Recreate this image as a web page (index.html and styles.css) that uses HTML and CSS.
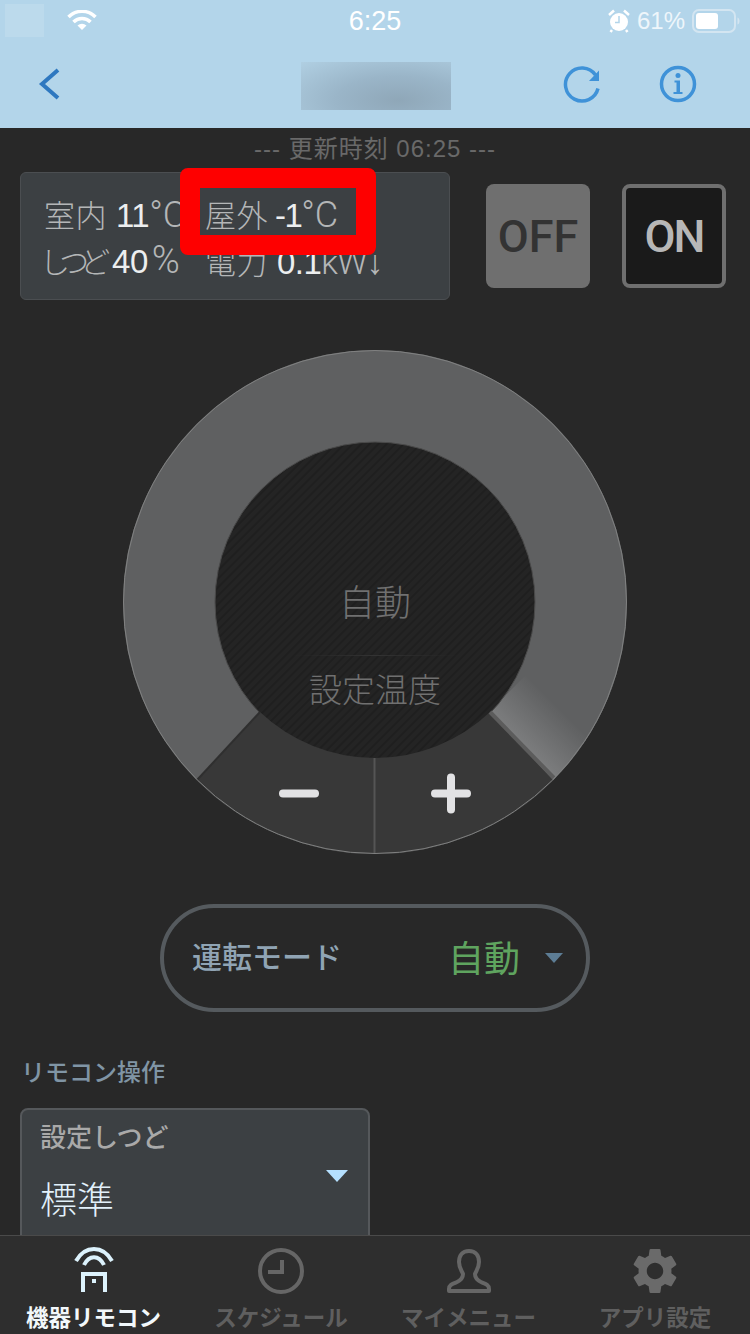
FILE: index.html
```html
<!DOCTYPE html>
<html lang="ja">
<head>
  <meta charset="UTF-8" />
  <title>機器リモコン</title>
  <meta name="viewport" content="width=device-width,initial-scale=1" />
  <link rel="stylesheet" href="styles.css">
</head>
<body>
  <header class="top">
    <div class="status">
      <div class="status-left">
        <div class="carrier"></div>
        <svg class="wifi" viewBox="0 0 30 20" width="30" height="20">
          <path d="M1.5 7A19 19 0 0 1 28.500 7" fill="none" stroke="#fff" stroke-width="3.500"/>
          <path d="M6.500 12A12 12 0 0 1 23.500 12" fill="none" stroke="#fff" stroke-width="3.500"/>
          <path d="M10.500 15.500A7 7 0 0 1 19.500 15.500L15 20Z" fill="#fff"/>
        </svg>
      </div>
      <div class="clock">6:25</div>
      <div class="status-right">
        <svg viewBox="0 0 22 24" width="22" height="24">
          <circle cx="11" cy="13" r="9" fill="#fff"/>
          <path d="M11 7V13.500H7" fill="none" stroke="#b3d5ea" stroke-width="1.500"/>
          <path d="M1 6L6 1.500M21 6L16 1.500M4 21L2.500 23M18 21L19.500 23" stroke="#fff" stroke-width="2.500" fill="none"/>
        </svg>
        <span class="battery-pct">61%</span>
        <svg viewBox="0 0 48 24" width="48" height="24">
          <rect x="1" y="1" width="42" height="22" rx="6" fill="none" stroke="#d3e5f1" stroke-width="2"/>
          <rect x="4" y="4" width="22" height="16" rx="3" fill="#fff"/>
          <path d="M45.500 8.500C47 9 47.500 10.500 47.500 12S47 15 45.500 15.500Z" fill="#d3e5f1"/>
        </svg>
      </div>
    </div>
    <nav class="nav">
      <div class="nav-left">
        <svg viewBox="0 0 24 34" width="24" height="34">
          <path d="M20 3L4 17L20 31" fill="none" stroke="#2e78c0" stroke-width="4"/>
        </svg>
      </div>
      <div class="nav-title"></div>
      <div class="nav-right">
        <svg viewBox="0 0 40 40" width="40" height="40">
          <path d="M36 24.500A16.500 16.500 0 1 1 33.500 11" fill="none" stroke="#3f92d8" stroke-width="3.500"/>
          <path d="M37 6.500V17H27Z" fill="#3f92d8"/>
        </svg>
        <svg viewBox="0 0 40 40" width="40" height="40">
          <circle cx="20" cy="20" r="16.500" fill="none" stroke="#3f92d8" stroke-width="3.500"/>
          <circle cx="20" cy="11.500" r="2.500" fill="#3f92d8"/>
          <path d="M16.500 16.500H22V28H24.500V30H15.500V28H18.500V18.500H16.500Z" fill="#3f92d8"/>
        </svg>
      </div>
    </nav>
  </header>

  <main class="content">
    <div class="updated">--- 更新時刻 06:25 ---</div>

    <section class="summary">
      <div class="readings">
        <div><span class="lbl">室内</span> <span class="val">11</span><span class="unit">°C</span></div>
        <div><span class="lbl">屋外</span> <span class="val minus">-1</span><span class="unit">°C</span></div>
        <div><span class="lbl tight">しつど</span> <span class="val">40</span><span class="unit pct">%</span></div>
        <div><span class="lbl">電力</span> <span class="val">0.1</span><span class="unit kw">kW↓</span></div>
        <div class="redact"></div>
      </div>
      <div class="power">
        <div class="power-btn off">OFF</div>
        <div class="power-btn on">ON</div>
      </div>
    </section>

    <section class="dial">
      <svg viewBox="0 0 504 504" width="504" height="504">
        <defs>
          <clipPath id="disc"><circle cx="252" cy="252" r="252"/></clipPath>
          <linearGradient id="glow" gradientUnits="userSpaceOnUse" x1="398" y1="396" x2="436" y2="358">
            <stop offset="0" stop-color="#7d7e7f"/>
            <stop offset="1" stop-color="#5f6061"/>
          </linearGradient>
          <pattern id="stripes" width="6" height="6" patternUnits="userSpaceOnUse" patternTransform="rotate(-45)">
            <rect width="6" height="6" fill="#242424"/>
            <rect width="6" height="2" fill="#1f1f1f"/>
          </pattern>
          <linearGradient id="rule">
            <stop offset="0" stop-color="#2e2e2e" stop-opacity="0"/>
            <stop offset=".5" stop-color="#333"/>
            <stop offset="1" stop-color="#2e2e2e" stop-opacity="0"/>
          </linearGradient>
        </defs>
        <circle cx="252" cy="252" r="252" fill="#5f6061"/>
        <g clip-path="url(#disc)">
          <path d="M366 362L430 430L510 350L446 282Z" fill="url(#glow)"/>
          <circle cx="252" cy="252" r="160" fill="url(#stripes)"/>
          <circle cx="252" cy="252" r="160" fill="none" stroke="#4a4a4a" stroke-width="1"/>
          <path d="M137 362A167 167 0 0 0 367 362L432 432A254 254 0 0 1 72 432Z" fill="#383838"/>
          <path d="M137 362L74 430" stroke="#2f2f2f" stroke-width="2"/>
          <path d="M367 362L431 428" stroke="#5c5c5c" stroke-width="4"/>
          <path d="M251.500 408V504" stroke="#555" stroke-width="2"/>
        </g>
        <circle cx="252" cy="252" r="251.500" fill="none" stroke="#808181" stroke-width="1"/>
        <rect x="167" y="305" width="170" height="1" fill="url(#rule)"/>
        <path d="M160 443.500H192" stroke="#e2e2e4" stroke-width="8" stroke-linecap="round"/>
        <path d="M312 443.500H344M328 427.500V459.500" stroke="#e2e2e4" stroke-width="8" stroke-linecap="round"/>
      </svg>
      <div class="dial-mode">自動</div>
      <div class="dial-label">設定温度</div>
    </section>

    <section class="mode">
      <span class="mode-name">運転モード</span>
      <span class="mode-value">自動</span>
      <span class="mode-caret"></span>
    </section>

    <h2 class="heading">リモコン操作</h2>
    <section class="control">
      <div class="control-name">設定しつど</div>
      <div class="control-row">
        <span class="control-value">標準</span>
        <span class="control-caret"></span>
      </div>
    </section>
  </main>

  <footer class="tabs">
    <div class="tab active">
      <svg viewBox="0 0 48 48" width="48" height="48" fill="none" stroke="#dcf2fc" stroke-width="4">
        <path d="M6 14C15 -2 33 -2 42 14"/>
        <path d="M14 18C19 7.500 29 7.500 34 18"/>
        <path d="M13 45V27H35V45"/>
        <rect x="22" y="32" width="4" height="4" fill="#dcf2fc" stroke="none"/>
      </svg>
      <span>機器リモコン</span>
    </div>
    <div class="tab">
      <svg viewBox="0 0 48 48" width="48" height="48" fill="none" stroke="#666" stroke-width="4">
        <circle cx="24" cy="24" r="21"/>
        <path d="M25 13V25H11"/>
      </svg>
      <span>スケジュール</span>
    </div>
    <div class="tab">
      <svg viewBox="0 0 48 48" width="48" height="48" fill="none" stroke="#666" stroke-width="4" stroke-linejoin="round">
        <path d="M24 4C17 4 14 9 14 15C14 21 17 24 18 27C18 31 16 33 12 35C7 37 4 38 4 42V44H44V42C44 38 41 37 36 35C32 33 30 31 30 27C31 24 34 21 34 15C34 9 31 4 24 4Z"/>
      </svg>
      <span>マイメニュー</span>
    </div>
    <div class="tab">
      <svg viewBox="1.500 1.500 21 21" width="48" height="48">
        <path fill="#6a6a6a" fill-rule="evenodd" d="M19.140 12.940c.04-.3.06-.61.06-.94 0-.32-.02-.64-.07-.94l2.030-1.580c.18-.14.23-.41.12-.61l-1.920-3.320c-.12-.22-.37-.29-.59-.22l-2.390.96c-.5-.38-1.030-.7-1.620-.94l-.36-2.540c-.04-.24-.24-.41-.48-.41h-3.840c-.24 0-.43.17-.47.41l-.36 2.540c-.59.24-1.130.57-1.620.94l-2.390-.96c-.22-.08-.47 0-.59.22L2.740 8.870c-.12.21-.08.47.12.61l2.030 1.580c-.05.3-.09.63-.09.94s.02.64.07.94l-2.030 1.580c-.18.14-.23.41-.12.61l1.920 3.320c.12.22.37.29.59.22l2.390-.96c.5.38 1.030.7 1.620.94l.36 2.540c.05.24.24.41.48.41h3.840c.24 0 .44-.17.47-.41l.36-2.540c.59-.24 1.130-.56 1.620-.94l2.390.96c.22.08.47 0 .59-.22l1.920-3.320c.12-.22.07-.47-.12-.61l-2.010-1.580zM12 15.600c-1.980 0-3.600-1.620-3.600-3.600s1.620-3.600 3.600-3.600 3.600 1.620 3.600 3.600-1.620 3.600-3.600 3.600z"/>
      </svg>
      <span>アプリ設定</span>
    </div>
  </footer>
</body>
</html>
```

FILE: styles.css
```css
* { box-sizing: border-box; }
html, body { margin: 0; padding: 0; }
body {
  width: 750px; height: 1334px;
  overflow: hidden;
  display: flex; flex-direction: column;
  background: #282828;
  font-family: "Liberation Sans", "Noto Sans CJK JP", sans-serif;
}

/* Top bar */
.top { background: #b3d5ea; height: 128px; flex: none; }
.status {
  height: 40px;
  display: grid; grid-template-columns: 1fr auto 1fr; align-items: center;
  color: #fff;
}
.status-left { display: flex; align-items: center; padding-left: 5px; gap: 23px; }
.carrier { width: 39px; height: 33px; background: #bcdaec; }
.wifi { margin-top: -2px; }
.clock { font-size: 27px; line-height: 40px; margin-top: 1px; }
.status-right { display: flex; align-items: center; justify-content: flex-end; gap: 7px; padding-right: 10px; }
.battery-pct { font-size: 24px; color: #eef6fb; }
.nav {
  height: 88px;
  display: grid; grid-template-columns: 1fr 151px 1fr; align-items: center;
}
.nav-left { padding-left: 38px; display: flex; }
.nav-title {
  height: 48px; margin-top: 4px; margin-left: 1px;
  background: radial-gradient(ellipse at 65% 80%, #8fa7b8 0%, #9ab5c8 45%, transparent 100%), #b0cfe2;
}
.nav-right { display: flex; justify-content: flex-end; gap: 56px; padding-right: 52px; }

/* Main area */
.content { flex: 1; min-height: 0; overflow: hidden; }
.updated {
  height: 40px;
  text-align: center;
  font-size: 24px; line-height: 42px;
  color: #696969;
  letter-spacing: 1px;
}

.summary { display: flex; padding: 4px 24px 0 20px; justify-content: space-between; }
.readings {
  position: relative;
  width: 430px; height: 128px;
  padding: 18px 0 0 23px;
  background: #3c4043;
  border: 1px solid #4b4e51;
  border-radius: 6px;
  display: grid; grid-template-columns: 161px auto; grid-auto-rows: 47px;
  font-size: 32px; line-height: 45px;
  color: #b4b6b7;
  white-space: nowrap;
}
.lbl { font-family: "Noto Sans CJK JP", sans-serif; font-weight: 300; font-size: 31px; letter-spacing: .5px; }
.lbl.tight { font-size: 30px; letter-spacing: -9px; margin: 0 2px 0 -4px; }
.val { color: #eceeef; font-size: 33px; letter-spacing: -.5px; }
.val.minus { margin-left: -2px; letter-spacing: -1.5px; }
.unit { font-family: Roboto, sans-serif; font-weight: 300; font-size: 36px; }
.unit.pct { margin-left: 4px; font-size: 38px; }
.unit.kw { font-size: 34px; letter-spacing: -1px; }
/* covers part of the readings, hole shows what is underneath */
.redact {
  position: absolute; left: 159px; top: -5px;
  width: 196px; height: 87px;
  border: 20px solid #fe0000;
  border-radius: 8px;
}

.power { display: flex; gap: 32px; padding-top: 12px; }
.power-btn {
  width: 104px; height: 104px;
  border-radius: 8px;
  display: flex; align-items: center; justify-content: center;
  font-family: Roboto, sans-serif; font-weight: 500; font-size: 45px;
}
.power-btn.off { background: #6f6f6f; color: #333; }
.power-btn.on { background: #1a1a1a; border: 4px solid #6f6f6f; color: #b7b7b7; letter-spacing: -2px; }

/* Dial */
.dial { position: relative; width: 504px; height: 504px; margin: 50px auto 0; }
.dial svg { display: block; }
.dial-mode, .dial-label {
  position: absolute; left: 0; right: 0;
  text-align: center;
  font-family: "Noto Sans CJK JP", sans-serif; font-weight: 300;
  color: #707070;
  white-space: nowrap;
}
.dial-mode { top: 226px; font-size: 36px; line-height: 48px; }
.dial-label { top: 315px; font-size: 33px; line-height: 46px; }

/* Mode selector */
.mode {
  width: 430px; height: 108px;
  margin: 50px auto 0;
  padding: 0 23px 0 28px;
  border: 4px solid #555a5e;
  border-radius: 54px;
  display: flex; align-items: center;
}
.mode-name {
  font-family: "Noto Sans CJK JP", sans-serif; font-weight: 500;
  font-size: 30px; color: #90a4b4;
  margin-top: -6px;
}
.mode-value {
  font-family: "Noto Sans CJK JP", sans-serif; font-weight: 400;
  font-size: 36px; color: #5fa45f;
  margin-left: auto; margin-top: -4px;
}
.mode-caret {
  margin-left: 25px;
  border-left: 9px solid transparent; border-right: 9px solid transparent;
  border-top: 10px solid #5d7d95;
}

.heading {
  margin: 42px 0 0 21px;
  font-family: "Noto Sans CJK JP", sans-serif; font-weight: 500;
  font-size: 24px; line-height: 34px;
  color: #8095a5;
}
.control {
  width: 350px; height: 160px;
  margin: 20px 0 0 20px;
  padding: 10px 20px 0 18px;
  background: #3c4043;
  border: 2px solid #55585b;
  border-radius: 8px;
  font-family: "Noto Sans CJK JP", sans-serif;
}
.control-name { font-size: 26px; line-height: 32px; font-weight: 500; color: #a9a9a9; }
.control-row { position: relative; margin-top: 20px; }
.control-value { font-size: 37px; line-height: 52px; font-weight: 300; color: #e2f1fb; }
.control-caret {
  position: absolute; right: 0; top: -2px;
  border-left: 11px solid transparent; border-right: 11px solid transparent;
  border-top: 12px solid #b5e0ff;
}

/* Bottom tabs */
.tabs {
  flex: none; height: 99px;
  display: grid; grid-template-columns: 187px 188px 187px 186px;
  padding: 11px 0 0;
  background: #2e2e2e;
  border-top: 1px solid #4a4a4a;
  overflow: hidden;
}
.tab {
  display: flex; flex-direction: column; align-items: center; gap: 7px;
  font-family: "Noto Sans CJK JP", sans-serif; font-weight: 700;
  font-size: 22.500px; line-height: 28px;
  color: #5f5f5f;
  white-space: nowrap;
}
.tab svg { display: block; flex: none; }
.tab.active { color: #f2f8fb; }
```
